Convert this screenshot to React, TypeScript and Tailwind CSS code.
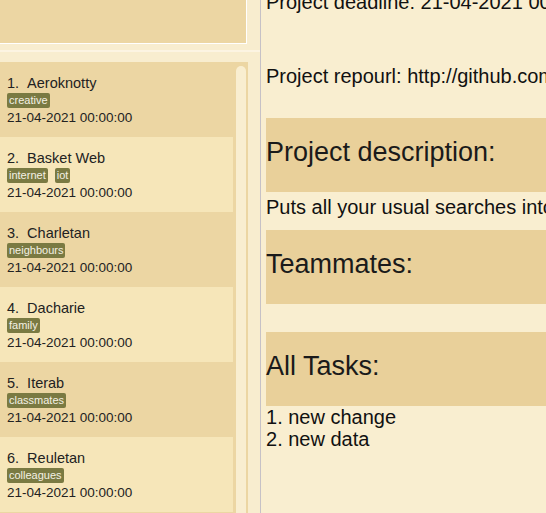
import React from 'react';

interface Project {
  id: number;
  name: string;
  tags: string[];
  deadline: string;
}

const projects: Project[] = [
  { id: 1, name: 'Aeroknotty', tags: ['creative'], deadline: '21-04-2021 00:00:00' },
  { id: 2, name: 'Basket Web', tags: ['internet', 'iot'], deadline: '21-04-2021 00:00:00' },
  { id: 3, name: 'Charletan', tags: ['neighbours'], deadline: '21-04-2021 00:00:00' },
  { id: 4, name: 'Dacharie', tags: ['family'], deadline: '21-04-2021 00:00:00' },
  { id: 5, name: 'Iterab', tags: ['classmates'], deadline: '21-04-2021 00:00:00' },
  { id: 6, name: 'Reuletan', tags: ['colleagues'], deadline: '21-04-2021 00:00:00' },
];

const tasks = ['new change', 'new data'];

const ProjectCard: React.FC<{ project: Project; index: number }> = ({ project, index }) => (
  <div
    className={`h-[75px] shrink-0 pl-[7px] pt-[13px] ${
      index % 2 === 0 ? 'bg-[#ecd6a3]' : 'bg-[#f6e6b9]'
    }`}
  >
    <div className="flex gap-[8px] text-[14.5px] leading-[17px] text-[#222]">
      <span>{project.id}.</span>
      <span>{project.name}</span>
    </div>
    <div className="mt-[1px] flex gap-[7px]">
      {project.tags.map((tag) => (
        <span
          key={tag}
          className="h-[15px] rounded-[2px] bg-[#7a7a42] px-[2px] text-[11px] leading-[15px] text-[#f4f1e4]"
        >
          {tag}
        </span>
      ))}
    </div>
    <div className="mt-[1px] text-[13.5px] leading-[17px] text-[#222]">{project.deadline}</div>
  </div>
);

const SectionHeader: React.FC<{ title: string }> = ({ title }) => (
  <div className="flex h-[74px] items-center bg-[#e9d09a] pb-[6px] text-[27px] leading-[31px] text-[#1a1a1a]">
    {title}
  </div>
);

export default function App() {
  return (
    <div
      className="flex h-[513px] w-[546px] overflow-hidden bg-[#f9eed0]"
      style={{ fontFamily: '"Liberation Sans", Arial, sans-serif' }}
    >
      {/* Project list */}
      <div className="flex w-[260px] shrink-0 flex-col bg-[#f8edcf]">
        <div className="h-[44px] w-[247px] shrink-0 border-b border-r border-white bg-[#ecd6a3]" />
        <div className="h-[18px] shrink-0">
          <div className="mt-[6px] h-[2px] w-full bg-[#fcf4e2]" />
        </div>
        <div className="flex h-[451px] w-[248px] bg-[#ecd6a3]">
          <div className="flex w-[233px] flex-col">
            {projects.map((p, i) => (
              <ProjectCard key={p.id} project={p} index={i} />
            ))}
          </div>
          <div className="ml-[3px] mt-[4px] w-[10px] rounded-t-[5px] bg-[#f9eed0]" />
        </div>
      </div>

      {/* Project details */}
      <div className="flex-1 overflow-hidden border-l border-[#c6c1c6] bg-[#f9eed0]">
        <div className="-mt-[9px] whitespace-nowrap pl-[5px] text-[20px] leading-[23px] text-[#111]">
          <div>Project deadline: 21-04-2021 00:00:00</div>
          <div className="mt-[51px]">Project repourl: http://github.com/aeroknotty</div>
          <div className="mt-[30px]">
            <SectionHeader title="Project description:" />
          </div>
          <div className="mt-[4px]">Puts all your usual searches into one easy place</div>
          <div className="mt-[11px]">
            <SectionHeader title="Teammates:" />
          </div>
          <div className="mt-[28px]">
            <SectionHeader title="All Tasks:" />
          </div>
          <div>
            {tasks.map((t, i) => (
              <div key={t} className="leading-[22px]">
                {i + 1}. {t}
              </div>
            ))}
          </div>
        </div>
      </div>
    </div>
  );
}
